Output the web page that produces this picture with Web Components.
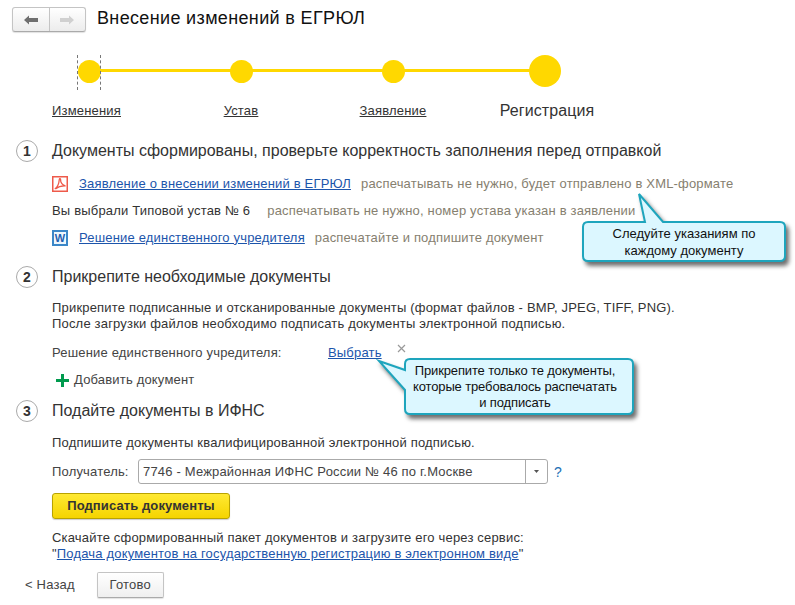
<!DOCTYPE html>
<html lang="ru">
<head>
<meta charset="utf-8">
<title>Внесение изменений в ЕГРЮЛ</title>
<style>
  html, body { margin: 0; background: #fff; }
  body { font: 13px/16px "Liberation Sans", Arial, sans-serif; color: #333; letter-spacing: .18px; }
</style>
</head>
<body>
<wizard-page>
  <page-header slot="header">Внесение изменений в ЕГРЮЛ</page-header>
  <step-tracker></step-tracker>

  <step-section num="1" title-text="Документы сформированы, проверьте корректность заполнения перед отправкой" style="margin-top:19px">
    <doc-row icon="pdf" link="Заявление о внесении изменений в ЕГРЮЛ" note="распечатывать не нужно, будет отправлено в XML-формате" style="margin-top:8px"></doc-row>
    <doc-row label="Вы выбрали Типовой устав № 6" note="распечатывать не нужно, номер устава указан в заявлении"></doc-row>
    <doc-row icon="word" link="Решение единственного учредителя" note="распечатайте и подпишите документ"></doc-row>
  </step-section>

  <step-section num="2" title-text="Прикрепите необходимые документы" style="margin-top:15px">
    <text-block style="margin-top:12px">Прикрепите подписанные и отсканированные документы (формат файлов - BMP, JPEG, TIFF, PNG).<br>После загрузки файлов необходимо подписать документы электронной подписью.</text-block>
    <attach-row style="margin-top:13px"></attach-row>
    <add-document style="margin-top:11px"></add-document>
  </step-section>

  <step-section num="3" title-text="Подайте документы в ИФНС" style="margin-top:12px">
    <text-block style="margin-top:13px">Подпишите документы квалифицированной электронной подписью.</text-block>
    <recipient-field style="margin-top:8px"></recipient-field>
    <sign-button style="margin-top:9px">Подписать документы</sign-button>
    <text-block style="margin-top:11px">Скачайте сформированный пакет документов и загрузите его через сервис:<br>"<a href="#" style="color:#1c55ab">Подача документов на государственную регистрацию в электронном виде</a>"</text-block>
  </step-section>

  <wizard-footer style="margin-top:10px"></wizard-footer>

  <call-out slot="overlay" box="583,222,785,261" tail="639,194 645,222 663,222" line="17">Следуйте указаниям по<br>каждому документу</call-out>
  <call-out slot="overlay" box="405,359,633,414" tail="379,361 405,370 405,390" line="16" shift="8">Прикрепите только те документы,<br>которые требовалось распечатать<br>и подписать</call-out>
</wizard-page>

<script>
// Корневой контейнер страницы помощника
class WizardPage extends HTMLElement {
  constructor() {
    super();
    this.attachShadow({ mode: 'open' }).innerHTML = `
      <style>
        :host { display: block; position: relative; width: 795px; height: 605px; overflow: hidden; }
      </style>
      <slot name="header"></slot>
      <slot></slot>
      <slot name="overlay"></slot>
    `;
  }
}

class PageHeader extends HTMLElement {
  constructor() {
    super();
    this.attachShadow({ mode: 'open' }).innerHTML = `
      <style>
        :host { display: flex; align-items: center; gap: 11px; padding: 7px 12px 0; height: 25px; }
        .nav { display: flex; width: 74px; height: 25px; box-sizing: border-box; border: 1px solid #c4c4c4; border-bottom-color: #aaa; border-radius: 3px;
          background: linear-gradient(#fff, #ececec); box-shadow: 0 1px 1px rgba(0,0,0,.12); }
        .nav span { flex: 1; display: flex; align-items: center; justify-content: center; }
        .nav span + span { border-left: 1px solid #c4c4c4; }
        h1 { margin: 0 0 4px; font: 400 18px/24px "Liberation Sans", Arial, sans-serif; letter-spacing: .35px; color: #111; }
      </style>
      <div class="nav">
        <span><svg width="14" height="10" viewBox="0 0 14 10"><path d="M0 5 5 .5V3h9v4H5v2.500z" fill="#6f6f6f"/></svg></span>
        <span><svg width="14" height="10" viewBox="0 0 14 10"><path d="M14 5 9 .5V3H0v4h9v2.500z" fill="#d0d0d0"/></svg></span>
      </div>
      <h1><slot></slot></h1>
    `;
  }
}

class StepTracker extends HTMLElement {
  constructor() {
    super();
    this.attachShadow({ mode: 'open' }).innerHTML = `
      <style>
        :host { display: grid; grid-template-columns: repeat(4, 152px); padding: 23px 0 0 13px; }
        .step { position: relative; height: 32px; display: flex; align-items: center; justify-content: center; }
        .dot { width: 23px; height: 23px; border-radius: 50%; background: #ffd800; position: relative; z-index: 1; }
        .dot.big { width: 32px; height: 32px; }
        .step::after { content: ""; position: absolute; left: 50%; width: 100%; top: 14px; height: 3px; background: #ffd800; }
        .step.last::after { display: none; }
        .step.focus::before { content: ""; position: absolute; left: 64px; width: 22px; top: 0; height: 35px;
          border-left: 1px dashed #777; border-right: 1px dashed #777; z-index: 2; }
        .label { text-align: center; margin-top: 14px; line-height: 20px; color: #333; }
        .label a { color: #333; text-decoration: underline; }
        .label.first { padding-right: 5px; }
        .label.now { font-size: 16px; letter-spacing: .1px; padding-left: 4px; }
      </style>
      <div class="step focus"><div class="dot"></div></div>
      <div class="step"><div class="dot"></div></div>
      <div class="step"><div class="dot"></div></div>
      <div class="step last"><div class="dot big"></div></div>
      <div class="label first"><a href="#">Изменения</a></div>
      <div class="label"><a href="#">Устав</a></div>
      <div class="label"><a href="#">Заявление</a></div>
      <div class="label now">Регистрация</div>
    `;
  }
}

class StepSection extends HTMLElement {
  constructor() {
    super();
    this.attachShadow({ mode: 'open' });
  }

  connectedCallback() {
    const num = this.getAttribute('num') || '';
    const titleText = this.getAttribute('title-text') || '';
    this.shadowRoot.innerHTML = `
      <style>
        :host { display: block; padding-left: 16px; }
        .head { display: flex; align-items: center; gap: 14px; height: 22px; }
        .num { width: 22px; height: 22px; box-sizing: border-box; border: 1px solid #aaa; border-radius: 50%;
          display: flex; align-items: center; justify-content: center; font-size: 14px; font-weight: 700; letter-spacing: 0; color: #333; }
        .title { font-size: 16px; line-height: 22px; letter-spacing: 0; color: #333; }
        .body { padding-left: 36px; }
      </style>
      <div class="head"><div class="num">${num}</div><div class="title">${titleText}</div></div>
      <div class="body"><slot></slot></div>
    `;
  }
}

class DocRow extends HTMLElement {
  constructor() {
    super();
    this.attachShadow({ mode: 'open' });
  }

  connectedCallback() {
    const icon = this.getAttribute('icon');
    const link = this.getAttribute('link');
    const label = this.getAttribute('label');
    const note = this.getAttribute('note');
    const pdf = `<svg class="ico" width="16" height="16" viewBox="0 0 16 16">
      <rect x=".75" y=".75" width="14.500" height="14.500" fill="#fff" stroke="#ee5a4a" stroke-width="1.500"/>
      <path d="M2.800 13C5 11.500 7 7 7.300 3.500c.1-1.200 1.400-1.200 1.300.2C8.400 6.500 10.500 9.500 13.500 10 10 9.800 6.500 10.500 3.700 12.800" fill="none" stroke="#ee5a4a" stroke-width="1.300"/></svg>`;
    const word = `<span class="ico w">W</span>`;
    const iconHtml = icon === 'pdf' ? pdf : icon === 'word' ? word : '';
    const main = link ? `<a href="#">${link}</a>` : `<span class="plain">${label}</span>`;
    this.shadowRoot.innerHTML = `
      <style>
        :host { display: flex; align-items: center; height: 27px; }
        .ico { flex: none; margin-right: 11px; }
        .w { width: 16px; height: 16px; box-sizing: border-box; border: 2px solid #3b87c8; background: #eef6fc;
          font: 700 11px/12px "Liberation Sans", Arial, sans-serif; letter-spacing: 0; color: #1f5fb0; text-align: center; overflow: hidden; }
        a { color: #1c55ab; }
        .plain { color: #333; }
        .note { margin-left: ${link ? 10 : 17}px; color: #86806f; }
      </style>
      ${iconHtml}${main}<span class="note">${note}</span>
    `;
  }
}

class TextBlock extends HTMLElement {
  constructor() {
    super();
    this.attachShadow({ mode: 'open' }).innerHTML = `
      <style>:host { display: block; line-height: 16px; color: #333; }</style>
      <slot></slot>
    `;
  }
}

class AttachRow extends HTMLElement {
  constructor() {
    super();
    this.attachShadow({ mode: 'open' }).innerHTML = `
      <style>
        :host { display: flex; align-items: center; height: 16px; }
        .name { width: 276px; color: #444; }
        a { color: #1c55ab; }
        .close { position: relative; top: -5px; margin-left: 15px; }
      </style>
      <span class="name">Решение единственного учредителя:</span>
      <a href="#">Выбрать</a>
      <svg class="close" width="9" height="9" viewBox="0 0 9 9"><path d="M1 1l7 7M8 1l-7 7" stroke="#999" stroke-width="1.200"/></svg>
    `;
  }
}

class AddDocument extends HTMLElement {
  constructor() {
    super();
    this.attachShadow({ mode: 'open' }).innerHTML = `
      <style>
        :host { display: flex; align-items: center; gap: 5px; padding-left: 4px; height: 16px; color: #444; }
      </style>
      <svg width="13" height="13" viewBox="0 0 13 13"><path d="M5 0h3v5h5v3H8v5H5V8H0V5h5z" fill="#009a4e"/></svg>
      <span>Добавить документ</span>
    `;
  }
}

class RecipientField extends HTMLElement {
  constructor() {
    super();
    this.attachShadow({ mode: 'open' }).innerHTML = `
      <style>
        :host { display: flex; align-items: center; height: 25px; }
        .cap { width: 86px; color: #444; }
        .box { display: flex; width: 410px; height: 25px; box-sizing: border-box; border: 1px solid #aaa; border-radius: 3px; }
        .val { flex: 1; padding-left: 4px; line-height: 23px; color: #444; }
        .drop { width: 21px; border-left: 1px solid #aaa; display: flex; align-items: center; justify-content: center; }
        .help { margin-left: 6px; color: #1c6fb5; font-size: 14px; }
      </style>
      <span class="cap">Получатель:</span>
      <div class="box">
        <span class="val">7746 - Межрайонная ИФНС России № 46 по г.Москве</span>
        <span class="drop"><svg width="5" height="3" viewBox="0 0 5 3"><path d="M0 0h5L2.500 3z" fill="#555"/></svg></span>
      </div>
      <span class="help">?</span>
    `;
  }
}

class SignButton extends HTMLElement {
  constructor() {
    super();
    this.attachShadow({ mode: 'open' }).innerHTML = `
      <style>
        :host { display: flex; align-items: center; justify-content: center; width: 178px; height: 26px; box-sizing: border-box;
          border: 1px solid #b8a200; border-radius: 3px; background: linear-gradient(#ffe933, #f5d400);
          box-shadow: 0 1px 1px rgba(0,0,0,.2); font-weight: 700; letter-spacing: .1px; color: #333; }
      </style>
      <slot></slot>
    `;
  }
}

class WizardFooter extends HTMLElement {
  constructor() {
    super();
    this.attachShadow({ mode: 'open' }).innerHTML = `
      <style>
        :host { display: flex; align-items: center; padding-left: 25px; height: 26px; color: #444; }
        .btn { margin-left: 22px; width: 67px; height: 26px; box-sizing: border-box; border: 1px solid #c4c4c4; border-bottom-color: #aaa; border-radius: 2px;
          background: linear-gradient(#fff, #efefef); display: flex; align-items: center; justify-content: center; box-shadow: 0 1px 1px rgba(0,0,0,.12); }
      </style>
      <span>&lt; Назад</span>
      <div class="btn">Готово</div>
    `;
  }
}

// Выноска поверх содержимого: форма рисуется в svg, текст идет через slot
class CallOut extends HTMLElement {
  constructor() {
    super();
    this.attachShadow({ mode: 'open' });
  }

  connectedCallback() {
    const [x1, y1, x2, y2] = this.getAttribute('box').split(',').map(Number);
    const tail = this.getAttribute('tail').split(' ').map((p) => p.split(',').map(Number));
    const line = this.getAttribute('line') || 16;
    const shift = this.getAttribute('shift') || 0;
    const r = 5;
    // хвост стыкуется с верхней или с левой стороной прямоугольника
    const onTop = tail[1][1] === y1;
    const d = onTop
      ? `M${x1 + r} ${y1}L${tail[1][0]} ${y1}L${tail[0][0]} ${tail[0][1]}L${tail[2][0]} ${y1}L${x2 - r} ${y1}Q${x2} ${y1} ${x2} ${y1 + r}L${x2} ${y2 - r}Q${x2} ${y2} ${x2 - r} ${y2}L${x1 + r} ${y2}Q${x1} ${y2} ${x1} ${y2 - r}L${x1} ${y1 + r}Q${x1} ${y1} ${x1 + r} ${y1}Z`
      : `M${x1 + r} ${y1}L${x2 - r} ${y1}Q${x2} ${y1} ${x2} ${y1 + r}L${x2} ${y2 - r}Q${x2} ${y2} ${x2 - r} ${y2}L${x1 + r} ${y2}Q${x1} ${y2} ${x1} ${y2 - r}L${tail[2][0]} ${tail[2][1]}L${tail[0][0]} ${tail[0][1]}L${tail[1][0]} ${tail[1][1]}L${x1} ${y1 + r}Q${x1} ${y1} ${x1 + r} ${y1}Z`;
    this.shadowRoot.innerHTML = `
      <style>
        :host { position: absolute; left: 0; top: 0; width: 795px; height: 605px; display: block; pointer-events: none; }
        svg { position: absolute; left: 0; top: 0; overflow: visible; filter: drop-shadow(3px 4px 2px rgba(50,50,50,.7)); }
        .txt { position: absolute; left: ${x1}px; top: ${y1}px; width: ${x2 - x1 - shift}px; height: ${y2 - y1}px;
          display: flex; align-items: center; justify-content: center; text-align: center; color: #111;
          line-height: ${line}px; letter-spacing: ${shift ? '-.13px' : '0'}; }
      </style>
      <svg width="795" height="605" viewBox="0 0 795 605"><path d="${d}" fill="#dcf7ff" stroke="#1ea5bd" stroke-width="2"/></svg>
      <div class="txt"><div><slot></slot></div></div>
    `;
  }
}

customElements.define('wizard-page', WizardPage);
customElements.define('page-header', PageHeader);
customElements.define('step-tracker', StepTracker);
customElements.define('step-section', StepSection);
customElements.define('doc-row', DocRow);
customElements.define('text-block', TextBlock);
customElements.define('attach-row', AttachRow);
customElements.define('add-document', AddDocument);
customElements.define('recipient-field', RecipientField);
customElements.define('sign-button', SignButton);
customElements.define('wizard-footer', WizardFooter);
customElements.define('call-out', CallOut);
</script>
</body>
</html>
